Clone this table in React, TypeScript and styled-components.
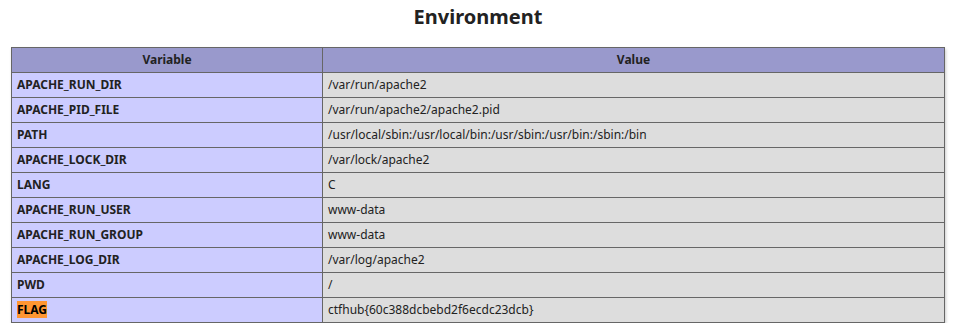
import React from "react";
import styled, { createGlobalStyle } from "styled-components";

const GlobalStyle = createGlobalStyle`
  html, body { margin: 0; padding: 0; background: #fff; }
  body {
    color: #222;
    font-family: "Noto Sans", "Open Sans", "DejaVu Sans", sans-serif;
  }
`;

const Page = styled.div`
  width: 956px;
  padding-top: 4px;
  text-align: center;
`;

const Title = styled.h2`
  margin: 0;
  font-size: 20px;
  line-height: 26px;
  font-weight: bold;
  color: #222;
`;

const Table = styled.table`
  border-collapse: collapse;
  border: 0;
  width: 934px;
  margin: 17px auto 0;
  text-align: left;
  box-shadow: 1px 2px 3px #ccc;
`;

const Cell = styled.td`
  border: 1px solid #666;
  font-size: 12px;
  line-height: 16px;
  padding: 4px 5px;
  vertical-align: baseline;
  color: #222;
`;

const HeaderCell = styled(Cell).attrs({ as: "th" })`
  background-color: #99c;
  font-weight: bold;
  text-align: center;
`;

const KeyCell = styled(Cell)`
  background-color: #ccf;
  width: 300px;
  font-weight: bold;
`;

const ValueCell = styled(Cell)`
  background-color: #ddd;
  max-width: 300px;
  overflow-x: auto;
  word-wrap: break-word;
`;

const Highlight = styled.span`
  background-color: #ff9632;
  color: #000;
`;

const rows: [string, string][] = [
  ["APACHE_RUN_DIR", "/var/run/apache2"],
  ["APACHE_PID_FILE", "/var/run/apache2/apache2.pid"],
  ["PATH", "/usr/local/sbin:/usr/local/bin:/usr/sbin:/usr/bin:/sbin:/bin"],
  ["APACHE_LOCK_DIR", "/var/lock/apache2"],
  ["LANG", "C"],
  ["APACHE_RUN_USER", "www-data"],
  ["APACHE_RUN_GROUP", "www-data"],
  ["APACHE_LOG_DIR", "/var/log/apache2"],
  ["PWD", "/"],
  ["FLAG", "ctfhub{60c388dcbebd2f6ecdc23dcb}"],
];

export default function App() {
  return (
    <>
      <GlobalStyle />
      <Page>
        <Title>Environment</Title>
        <Table>
          <tbody>
            <tr>
              <HeaderCell>Variable</HeaderCell>
              <HeaderCell>Value</HeaderCell>
            </tr>
            {rows.map(([k, v]) => (
              <tr key={k}>
                <KeyCell>{k === "FLAG" ? <Highlight>{k}</Highlight> : k}</KeyCell>
                <ValueCell>{v}</ValueCell>
              </tr>
            ))}
          </tbody>
        </Table>
      </Page>
    </>
  );
}
